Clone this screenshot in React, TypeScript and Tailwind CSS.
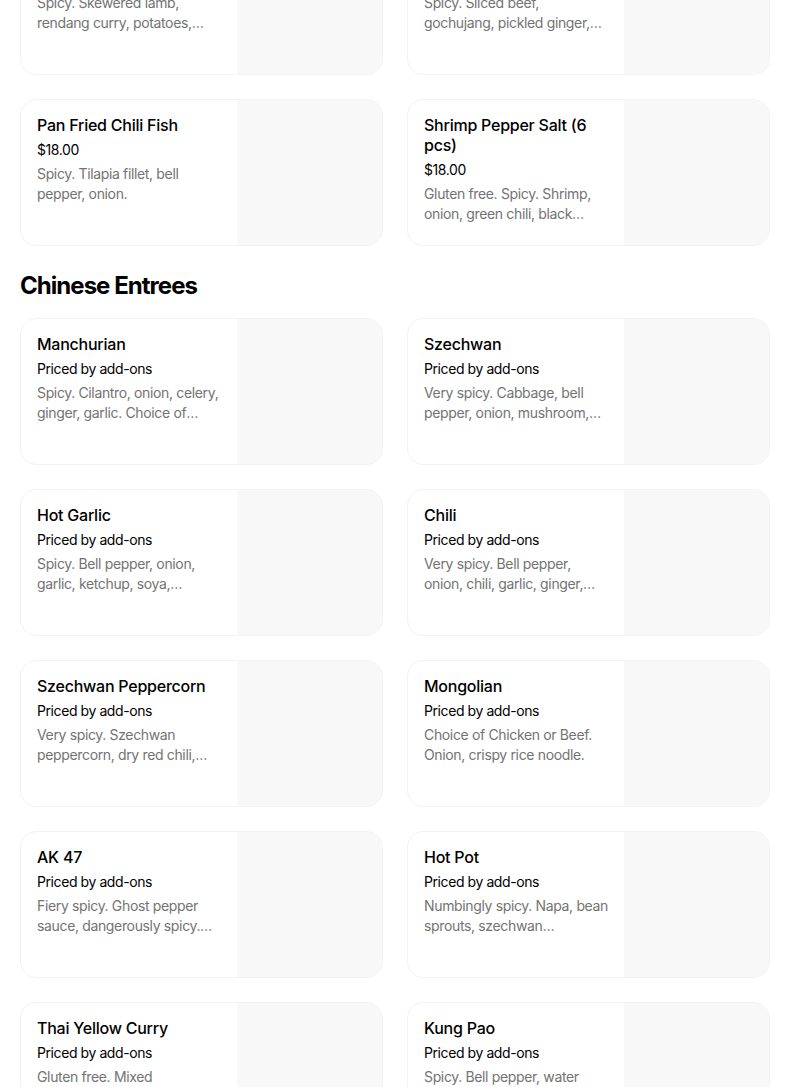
type Item = { name: string; price: string; desc: string };

const spicyPicks: Item[] = [
  { name: 'Lamb Rendang Satay', price: '$18.00', desc: 'Spicy. Skewered lamb, rendang curry, potatoes, onion, lemongrass.' },
  { name: 'Korean Fire Beef', price: '$18.00', desc: 'Spicy. Sliced beef, gochujang, pickled ginger, scallion, sesame.' },
  { name: 'Pan Fried Chili Fish', price: '$18.00', desc: 'Spicy. Tilapia fillet, bell pepper, onion.' },
  { name: 'Shrimp Pepper Salt (6 pcs)', price: '$18.00', desc: 'Gluten free. Spicy. Shrimp, onion, green chili, black pepper, garlic, salt.' },
];

const entrees: Item[] = [
  { name: 'Manchurian', price: 'Priced by add-ons', desc: 'Spicy. Cilantro, onion, celery, ginger, garlic. Choice of protein or vegetables.' },
  { name: 'Szechwan', price: 'Priced by add-ons', desc: 'Very spicy. Cabbage, bell pepper, onion, mushroom, carrot, dry red chili.' },
  { name: 'Hot Garlic', price: 'Priced by add-ons', desc: 'Spicy. Bell pepper, onion, garlic, ketchup, soya, vinegar, chili sauce.' },
  { name: 'Chili', price: 'Priced by add-ons', desc: 'Very spicy. Bell pepper, onion, chili, garlic, ginger, soya sauce.' },
  { name: 'Szechwan Peppercorn', price: 'Priced by add-ons', desc: 'Very spicy. Szechwan peppercorn, dry red chili, onion, bell pepper.' },
  { name: 'Mongolian', price: 'Priced by add-ons', desc: 'Choice of Chicken or Beef. Onion, crispy rice noodle.' },
  { name: 'AK 47', price: 'Priced by add-ons', desc: 'Fiery spicy. Ghost pepper sauce, dangerously spicy. Order at your own risk.' },
  { name: 'Hot Pot', price: 'Priced by add-ons', desc: 'Numbingly spicy. Napa, bean sprouts, szechwan peppercorn, chili oil.' },
  { name: 'Thai Yellow Curry', price: 'Priced by add-ons', desc: 'Gluten free. Mixed vegetables, coconut milk, yellow curry paste, basil.' },
  { name: 'Kung Pao', price: 'Priced by add-ons', desc: 'Spicy. Bell pepper, water chestnut, peanuts, dry red chili, scallion.' },
];

function MenuCard({ item }: { item: Item }) {
  return (
    <div className="flex h-[147px] overflow-hidden rounded-2xl border border-[#f3f3f3] bg-white">
      <div className="min-w-0 flex-1 px-4 pt-[15px]">
        <div className="text-[16px] font-medium leading-5 tracking-[-0.015em] text-black">{item.name}</div>
        <div className="mt-[5px] text-[14px] leading-5 tracking-[-0.03em] text-black">{item.price}</div>
        <p className="mt-1 line-clamp-2 text-[14px] leading-5 tracking-[-0.025em] text-[#737373]">{item.desc}</p>
      </div>
      <div className="h-[145px] w-[145px] shrink-0 bg-[#f8f8f8]" />
    </div>
  );
}

export default function App() {
  return (
    <div className="h-[1087px] overflow-hidden bg-white font-['Inter',sans-serif]">
      <div className="-mt-[72px] ml-5 w-[750px]">
        <div className="grid grid-cols-2 gap-6">
          {spicyPicks.map((it) => (
            <MenuCard key={it.name} item={it} />
          ))}
        </div>

        <h2 className="mb-[16px] mt-[24px] text-[24px] font-bold leading-8 tracking-[-0.04em] text-black">Chinese Entrees</h2>
        <div className="grid grid-cols-2 gap-6">
          {entrees.map((it) => (
            <MenuCard key={it.name} item={it} />
          ))}
        </div>
      </div>
    </div>
  );
}
